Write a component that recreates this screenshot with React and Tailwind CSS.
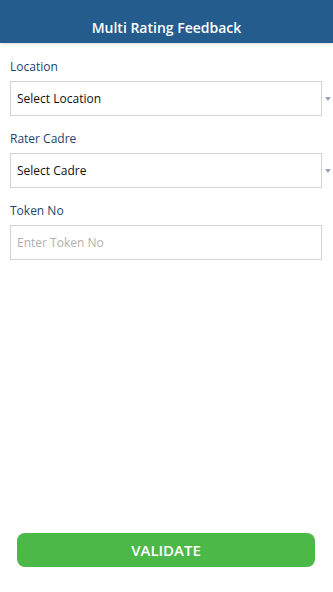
import React from 'react';

const font = { fontFamily: '"Open Sans", "Noto Sans", sans-serif' };

function Caret() {
  return (
    <svg className="absolute -right-[9px] top-[16px] w-[6px] h-[4px]" viewBox="0 0 6 4">
      <path d="M0 0h6L3 4z" fill="#9ca3af" />
    </svg>
  );
}

function SelectField({ label, value }) {
  return (
    <div className="flex flex-col">
      <label className="text-[12px] text-[#23456b] leading-[16px] mb-[6px]">{label}</label>
      <div className="relative">
        <div className="h-[35px] border border-[#d4d4d4] bg-white flex items-center px-[6px] text-[12px] text-[#111]">
          {value}
        </div>
        <Caret />
      </div>
    </div>
  );
}

export default function App() {
  return (
    <div className="w-[333px] h-[592px] bg-white flex flex-col overflow-hidden" style={font}>
      <div className="h-[43px] bg-[#245c8d] flex items-center justify-center shadow-sm">
        <h1 className="text-white text-[14px] font-semibold pt-[11px]">Multi Rating Feedback</h1>
      </div>

      <div className="flex flex-col gap-[15px] pl-[10px] pr-[11px] pt-[16px]">
        <SelectField label="Location" value="Select Location" />
        <SelectField label="Rater Cadre" value="Select Cadre" />
        <div className="flex flex-col">
          <label className="text-[12px] text-[#23456b] leading-[16px] mb-[6px]">Token No</label>
          <input
            placeholder="Enter Token No"
            className="h-[35px] border border-[#d4d4d4] px-[6px] text-[12px] outline-none placeholder:text-[#b0b0b0]"
          />
        </div>
      </div>

      <div className="flex-1" />

      <div className="px-[17px] pb-[25px] pr-[18px]">
        <button className="w-full h-[34px] rounded-[8px] bg-[#4cb848] text-white text-[15px] font-semibold">
          VALIDATE
        </button>
      </div>
    </div>
  );
}
